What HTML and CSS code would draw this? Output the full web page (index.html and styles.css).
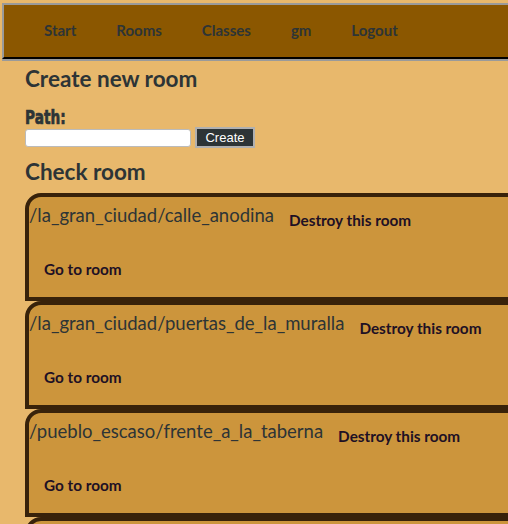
FILE: index.html
```html
<!DOCTYPE html>
<html>
<head>
<meta charset="utf-8">
<link rel="stylesheet" href="styles.css">
</head>
<body>
<nav class="topnav">
  <ul class="menu">
    <li><a href="#">Start</a></li>
    <li><a href="#">Rooms</a></li>
    <li><a href="#">Classes</a></li>
    <li><a href="#">gm</a></li>
    <li><a href="#">Logout</a></li>
  </ul>
</nav>
<main class="content">
  <h1 class="heading">Create new room</h1>
  <form class="create-form">
    <label class="path-label">Path:</label>
    <div class="form-row">
      <input class="path-input" type="text">
      <button class="create-btn" type="button">Create</button>
    </div>
  </form>
  <h2 class="heading heading-check">Check room</h2>
  <div class="rooms">
    <div class="room">
      <div class="room-head">
        <h3 class="room-title">/la_gran_ciudad/calle_anodina</h3>
        <a class="room-action" href="#">Destroy this room</a>
      </div>
      <a class="room-go" href="#">Go to room</a>
    </div>
    <div class="room">
      <div class="room-head">
        <h3 class="room-title">/la_gran_ciudad/puertas_de_la_muralla</h3>
        <a class="room-action" href="#">Destroy this room</a>
      </div>
      <a class="room-go" href="#">Go to room</a>
    </div>
    <div class="room">
      <div class="room-head">
        <h3 class="room-title">/pueblo_escaso/frente_a_la_taberna</h3>
        <a class="room-action" href="#">Destroy this room</a>
      </div>
      <a class="room-go" href="#">Go to room</a>
    </div>
    <div class="room room-last">
      <div class="room-head">
        <h3 class="room-title">/pueblo_escaso/plaza</h3>
        <a class="room-action" href="#">Destroy this room</a>
      </div>
      <a class="room-go" href="#">Go to room</a>
    </div>
  </div>
</main>
</body>
</html>
```
FILE: styles.css
```css
html, body {
  margin: 0;
  padding: 0;
  background: #e8b86c;
  overflow: hidden;
  height: 524px;
  font-family: Lato, "Open Sans", sans-serif;
  color: #2d3436;
}

.topnav {
  margin: 3px 0 0 2px;
  width: 560px;
  height: 52px;
  background: #8b5700;
  border-top: 2px solid #9a9a9a;
  border-left: 2px solid #9a9a9a;
  border-bottom: 2px solid #000;
  box-shadow: 0 2px 0 #9a9a9a;
  display: flex;
  align-items: center;
}

.menu {
  list-style: none;
  margin: 0 0 2px;
  padding: 0 0 0 20px;
  display: flex;
}

.menu li a {
  display: block;
  padding: 0 20px;
  font-weight: bold;
  font-size: 15px;
  color: #2d3436;
  text-decoration: none;
  line-height: 20px;
}

.content {
  padding: 0 0 0 25px;
}

.heading {
  margin: 0;
  font-size: 22.5px;
  font-weight: bold;
  line-height: 26px;
  color: #2d3436;
}

.content > .heading:first-child {
  margin-top: 7px;
}

.create-form {
  margin: 16px 0 0;
}

.path-label {
  display: inline-block;
  font-family: "DejaVu Sans", sans-serif;
  font-weight: bold;
  font-size: 19px;
  line-height: 19px;
  color: #2d3436;
  -webkit-text-stroke: 0.7px #2d3436;
  transform: scaleX(0.72);
  transform-origin: left center;
}

.form-row {
  display: flex;
  align-items: center;
  gap: 4px;
  margin-top: 0;
}

.path-input {
  box-sizing: border-box;
  width: 166px;
  height: 18px;
  margin: 0;
  border: 1px solid #bbb;
  border-radius: 3px;
  background: #fff;
  padding: 0 3px;
}

.create-btn {
  box-sizing: border-box;
  height: 21px;
  width: 60px;
  margin: 0;
  padding: 0;
  background: #2d3436;
  color: #fff;
  border: 2px solid #b0b0b0;
  font-family: "Liberation Sans", Arial, sans-serif;
  font-size: 13px;
}

.heading-check {
  margin-top: 11px;
}

.rooms {
  margin-top: 8px;
  width: 560px;
}

.room {
  box-sizing: border-box;
  height: 108px;
  background: #cc953c;
  border: 4px solid #38220a;
  border-top-left-radius: 16px;
  padding-top: 8px;
}

.room-head {
  display: flex;
  align-items: flex-start;
}

.room-title {
  margin: 0;
  font-size: 18.5px;
  font-weight: normal;
  line-height: 20px;
  color: #2d3436;
  white-space: nowrap;
}

.room-action {
  margin: 7px 0 0 15px;
  font-size: 15.3px;
  font-weight: bold;
  line-height: 17px;
  color: #201024;
  text-decoration: none;
  white-space: nowrap;
}

.room-go {
  display: inline-block;
  margin: 32px 0 0 15px;
  font-size: 15.3px;
  font-weight: bold;
  line-height: 17px;
  color: #201024;
  text-decoration: none;
}
```
